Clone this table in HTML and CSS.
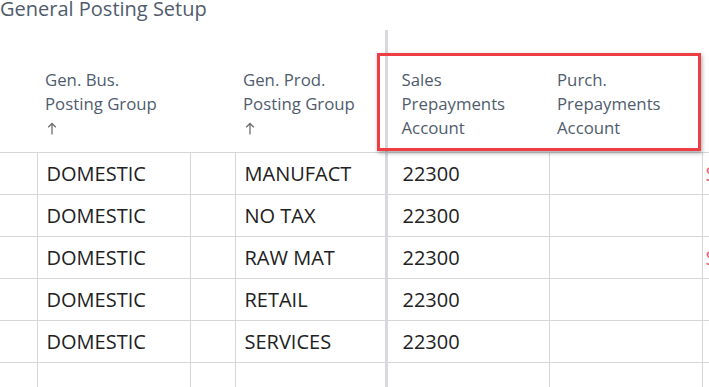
FILE: index.html
```html
<!DOCTYPE html>
<html lang="en">
<head>
  <meta charset="UTF-8" />
  <title>General Posting Setup</title>
  <link rel="stylesheet" href="styles.css">
</head>
<body>

  <h1 class="page-title">General Posting Setup</h1>

  <div class="list-wrap">
    <table class="list">
      <colgroup>
        <col class="c-sel">
        <col class="c-bus">
        <col class="c-gap">
        <col class="c-prod">
        <col class="c-sales">
        <col class="c-purch">
        <col class="c-next">
      </colgroup>
      <thead>
        <tr>
          <th></th>
          <th>Gen. Bus.<br>Posting Group<br><svg class="sort" width="10" height="13" viewBox="0 0 10 13"><path d="M5 12.5V1.5M1.2 5.3L5 1.5l3.8 3.8" fill="none" stroke="#6e6e6e" stroke-width="1.3"/></svg></th>
          <th></th>
          <th>Gen. Prod.<br>Posting Group<br><svg class="sort" width="10" height="13" viewBox="0 0 10 13"><path d="M5 12.5V1.5M1.2 5.3L5 1.5l3.8 3.8" fill="none" stroke="#6e6e6e" stroke-width="1.3"/></svg></th>
          <th class="frozen">Sales<br>Prepayments<br>Account</th>
          <th>Purch.<br>Prepayments<br>Account</th>
          <th></th>
        </tr>
      </thead>
      <tbody>
        <tr><td></td><td>DOMESTIC</td><td></td><td>MANUFACT</td><td class="frozen">22300</td><td></td><td class="warn">S</td></tr>
        <tr><td></td><td>DOMESTIC</td><td></td><td>NO TAX</td><td class="frozen">22300</td><td></td><td></td></tr>
        <tr><td></td><td>DOMESTIC</td><td></td><td>RAW MAT</td><td class="frozen">22300</td><td></td><td class="warn">S</td></tr>
        <tr><td></td><td>DOMESTIC</td><td></td><td>RETAIL</td><td class="frozen">22300</td><td></td><td></td></tr>
        <tr><td></td><td>DOMESTIC</td><td></td><td>SERVICES</td><td class="frozen">22300</td><td></td><td></td></tr>
        <tr><td></td><td></td><td></td><td></td><td class="frozen"></td><td></td><td></td></tr>
      </tbody>
    </table>

    <!-- highlight around the prepayment columns -->
    <div class="highlight"></div>
  </div>

</body>
</html>
```

FILE: styles.css
```css
* {
  margin: 0;
  padding: 0;
  box-sizing: border-box;
}

body {
  background-color: #ffffff;
  font-family: "Open Sans", "Noto Sans", sans-serif;
  width: 709px;
  height: 387px;
  overflow: hidden;
}

.page-title {
  font-size: 20px;
  font-weight: 400;
  line-height: 18px;
  color: #505c6d;
  height: 30px;
}

.list-wrap {
  position: relative;
}

.list {
  border-collapse: collapse;
  table-layout: fixed;
  width: 730px;
}

.c-sel { width: 37px; }
.c-bus { width: 153px; }
.c-gap { width: 45px; }
.c-prod { width: 151px; }
.c-sales { width: 163px; }
.c-purch { width: 153px; }
.c-next { width: 28px; }

.list th {
  text-align: left;
  vertical-align: bottom;
  font-weight: 400;
  font-size: 16.8px;
  line-height: 24px;
  color: #505c6d;
  padding: 0 0 12px 8px;
  height: 122px;
  border-bottom: 1px solid #d6d6d6;
  white-space: nowrap;
}

.list th .sort {
  margin-left: 2px;
  vertical-align: -1px;
}

.list td {
  font-size: 20px;
  line-height: 40px;
  height: 42px;
  padding: 1px 0 0 9px;
  color: #212121;
  border-bottom: 1px solid #d6d6d6;
  border-right: 1px solid #d6d6d6;
  white-space: nowrap;
  overflow: hidden;
}

.list td:nth-child(4) {
  border-right: none;
}

.list .frozen {
  border-left: 3px solid #d8d8de;
}

.list th.frozen {
  padding-left: 14px;
}

.list td.frozen {
  padding-left: 15px;
}

.list td.warn {
  color: #e8657a;
  padding-left: 3px;
}

.highlight {
  position: absolute;
  left: 377px;
  top: 23px;
  width: 324px;
  height: 98px;
  border: 3px solid #ee3e45;
  box-shadow: 1px 2px 4px rgba(0, 0, 0, 0.35);
}
```
